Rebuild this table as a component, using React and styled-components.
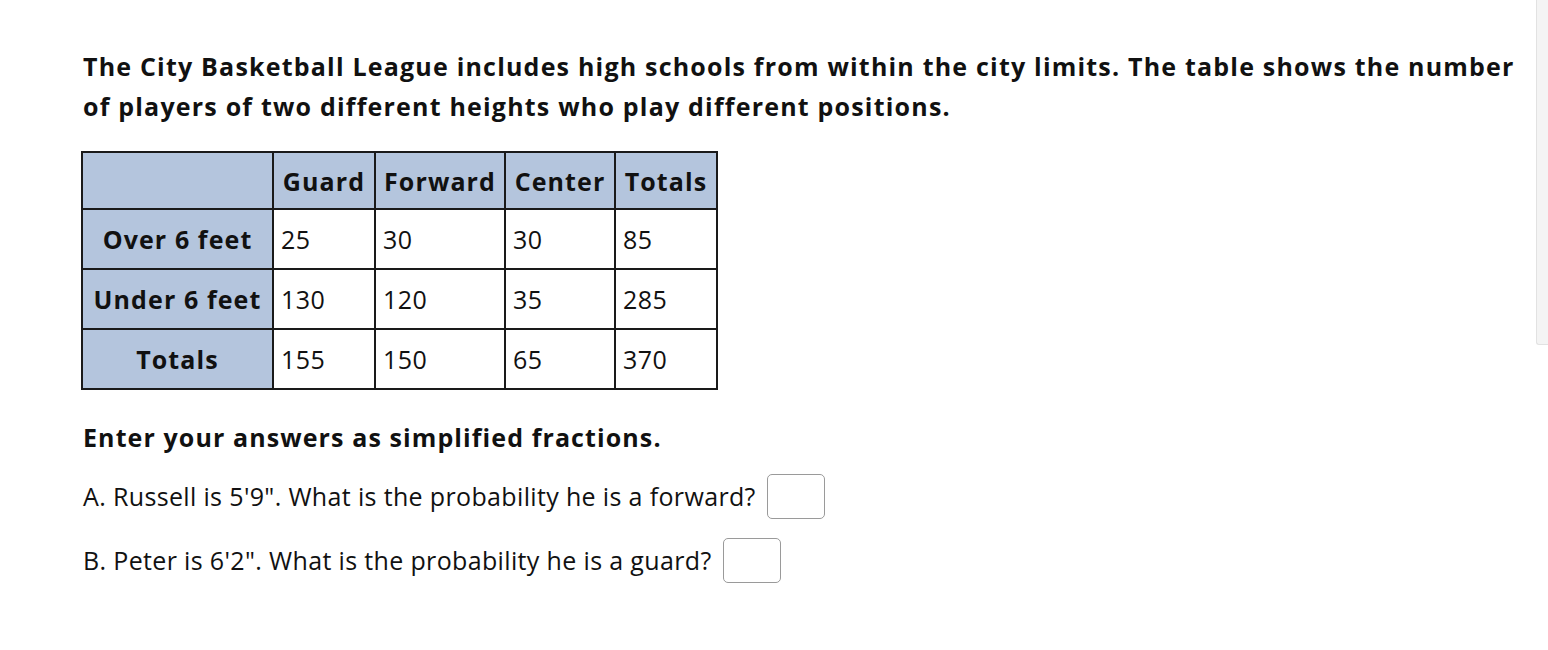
import React from 'react';
import styled, { createGlobalStyle } from 'styled-components';

const GlobalStyle = createGlobalStyle`
  html, body {
    margin: 0;
    padding: 0;
    background: #ffffff;
  }
  body {
    font-family: "Open Sans", Lato, sans-serif;
    color: #111;
  }
`

const Page = styled.div`
  display: flex;
  width: 1548px;
  height: 650px;
  overflow: hidden;
`
const Content = styled.div`
  flex-grow: 1;
  padding: 46px 0 0 83px;
`
const Scrollbar = styled.div`
  width: 11px;
  height: 344px;
  background: #f4f4f4;
  border-left: 1px solid #e2e2e2;
  border-bottom: 1px solid #e2e2e2;
  border-bottom-left-radius: 3px;
`
const Intro = styled.p`
  margin: 0;
  font-size: 25px;
  font-weight: 700;
  line-height: 40px;
  letter-spacing: 1.2px;
  width: 1448px;
`
const Table = styled.table`
  margin: 25px 0 0 -2px;
  border-collapse: collapse;
  table-layout: fixed;
  font-size: 25px;
  letter-spacing: 1.1px;
`
const HeadCell = styled.th`
  background: #b4c5dd;
  border: 2px solid #1a1a1a;
  height: ${(props) => (props.body ? 58 : 57)}px;
  padding: 0 4px;
  font-weight: 700;
  text-align: center;
  white-space: nowrap;
  width: ${(props) => props.w}px;
  box-sizing: border-box;
`
const Cell = styled.td`
  border: 2px solid #1a1a1a;
  height: 58px;
  padding: 0 7px;
  font-weight: 400;
  letter-spacing: 0.4px;
  text-align: left;
`
const Instructions = styled.div`
  margin-top: 30px;
  font-size: 25px;
  font-weight: 700;
  letter-spacing: 1.1px;
`
const Question = styled.div`
  display: flex;
  align-items: center;
  gap: 11px;
  font-size: 25px;
  letter-spacing: 0.35px;
  height: 46px;
  margin-top: ${(props) => props.top}px;
`
const AnswerBox = styled.div`
  width: 56px;
  height: 43px;
  border: 1px solid #9a9a9a;
  border-radius: 5px;
  background: #fff;
`

const columns = [
  { label: '', w: 191 },
  { label: 'Guard', w: 102 },
  { label: 'Forward', w: 130 },
  { label: 'Center', w: 110 },
  { label: 'Totals', w: 102 },
]

const rows = [
  { label: 'Over 6 feet', values: [25, 30, 30, 85] },
  { label: 'Under 6 feet', values: [130, 120, 35, 285] },
  { label: 'Totals', values: [155, 150, 65, 370] },
]

const App = () => {
  return (
    <Page>
      <GlobalStyle />
      <Content>
        <Intro>
          The City Basketball League includes high schools from within the city limits. The table shows the number
          of players of two different heights who play different positions.
        </Intro>
        <Table>
          <thead>
            <tr>
              {columns.map((col, i) => (
                <HeadCell key={i} w={col.w}>{col.label}</HeadCell>
              ))}
            </tr>
          </thead>
          <tbody>
            {rows.map((row) => (
              <tr key={row.label}>
                <HeadCell body>{row.label}</HeadCell>
                {row.values.map((v, i) => (
                  <Cell key={i}>{v}</Cell>
                ))}
              </tr>
            ))}
          </tbody>
        </Table>
        <Instructions>Enter your answers as simplified fractions.</Instructions>
        <Question top={19}>
          A. Russell is 5'9". What is the probability he is a forward?
          <AnswerBox />
        </Question>
        <Question top={18}>
          B. Peter is 6'2". What is the probability he is a guard?
          <AnswerBox />
        </Question>
      </Content>
      <Scrollbar />
    </Page>
  )
}

export default App;
